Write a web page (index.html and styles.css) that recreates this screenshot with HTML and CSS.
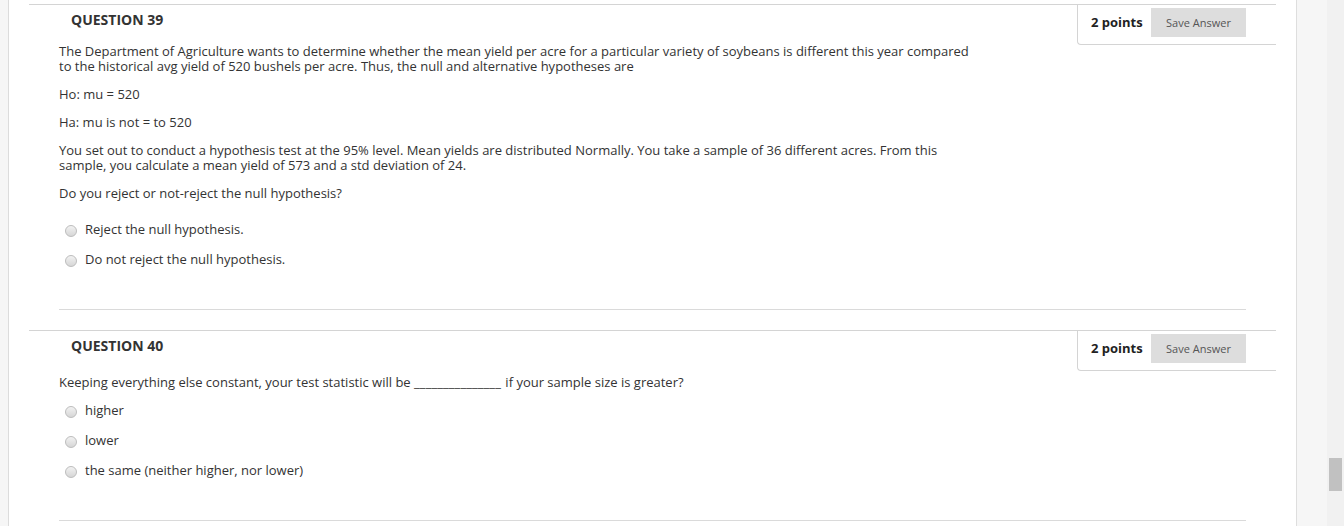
FILE: index.html
```html
<!DOCTYPE html>
<html>
<head>
<meta charset="utf-8">
<link rel="stylesheet" href="styles.css">
</head>
<body>
<div class="page">
  <div class="gutter"></div>
  <main class="main">
    <section class="question q39">
      <div class="q-head">
        <h3 class="q-title">QUESTION 39</h3>
        <div class="points-box">
          <span class="points">2 points</span>
          <button class="save">Save Answer</button>
        </div>
      </div>
      <div class="q-body">
        <div class="q-text">
          <p>The Department of Agriculture wants to determine whether the mean yield per acre for a particular variety of soybeans is different this year compared to the historical avg yield of 520 bushels per acre. Thus, the null and alternative hypotheses are</p>
          <p>Ho: mu = 520</p>
          <p>Ha: mu is not = to 520</p>
          <p>You set out to conduct a hypothesis test at the 95% level. Mean yields are distributed Normally. You take a sample of 36 different acres. From this sample, you calculate a mean yield of 573 and a std deviation of 24.</p>
          <p>Do you reject or not-reject the null hypothesis?</p>
        </div>
        <ul class="options">
          <li><span class="radio"></span><span>Reject the null hypothesis.</span></li>
          <li><span class="radio"></span><span>Do not reject the null hypothesis.</span></li>
        </ul>
      </div>
      <div class="sep"></div>
    </section>
    <section class="question q40">
      <div class="q-head">
        <h3 class="q-title">QUESTION 40</h3>
        <div class="points-box">
          <span class="points">2 points</span>
          <button class="save">Save Answer</button>
        </div>
      </div>
      <div class="q-body">
        <div class="q-text">
          <p>Keeping everything else constant, your test statistic will be <span class="blank">_______________</span> if your sample size is greater?</p>
        </div>
        <ul class="options">
          <li><span class="radio"></span><span>higher</span></li>
          <li><span class="radio"></span><span>lower</span></li>
          <li><span class="radio"></span><span>the same (neither higher, nor lower)</span></li>
        </ul>
      </div>
      <div class="sep"></div>
    </section>
  </main>
  <aside class="side"></aside>
  <div class="scrollbar"><div class="thumb"></div></div>
</div>
</body>
</html>
```
FILE: styles.css
```css
* { box-sizing: border-box; }
html, body { margin: 0; padding: 0; }
body {
  font-family: "Open Sans", "Liberation Sans", sans-serif;
  color: #333;
  background: #fff;
  font-size: 13px;
}
.page {
  display: grid;
  grid-template-columns: 9px 1fr 31px 17px;
  height: 526px;
  overflow: hidden;
}
.gutter {
  background: #f6f6f6;
  border-right: 1px solid #dcdcdc;
}
.main {
  padding: 4px 20px 0 20px;
  background: #fff;
}
.side {
  background: #f6f6f6;
  border-left: 1px solid #dedede;
}
.scrollbar {
  background: #f1f1f1;
  position: relative;
}
.thumb {
  position: absolute;
  left: 2px;
  right: 2px;
  top: 458px;
  height: 33px;
  background: #c1c1c1;
}
.question {
  border-top: 1px solid #d4d4d4;
}
.q-head {
  display: flex;
  justify-content: space-between;
  align-items: flex-start;
  height: 39px;
}
.q-title {
  margin: 5px 0 0 42px;
  font-size: 14px;
  line-height: 20px;
  font-weight: 700;
  color: #333;
}
.points-box {
  width: 199px;
  height: 40px;
  border-left: 1px solid #d4d4d4;
  border-bottom: 1px solid #d4d4d4;
  border-bottom-left-radius: 4px;
  display: flex;
  align-items: flex-start;
  padding: 3px 30px 0 13px;
  justify-content: space-between;
  background: #fff;
  position: relative;
}
.points {
  font-weight: 700;
  font-size: 13px;
  line-height: 29px;
  color: #222;
}
.save {
  width: 95px;
  height: 29px;
  border: 0;
  background: #dddddd;
  color: #555;
  font-family: "Open Sans", "Liberation Sans", sans-serif;
  font-size: 11px;
  padding: 0;
}
.q-body {
  padding: 0 30px;
}
.q40 .q-body { padding-top: 5px; }
.q-text { max-width: 920px; }
.q-text p {
  margin: 0 0 13px;
  line-height: 15px;
}
.q40 .q-text p { margin-bottom: 5px; }
.blank { letter-spacing: 0.1px; margin-right: 1px; }
.options {
  list-style: none;
  margin: 0;
  padding: 0;
}
.options li {
  height: 30px;
  display: flex;
  align-items: center;
  padding-left: 6px;
  line-height: 15px;
}
.radio {
  width: 12px;
  height: 12px;
  border-radius: 50%;
  border: 1px solid #bdbdbd;
  background: linear-gradient(#f2f2f2, #d6d6d6);
  margin: 4px 8px 0 0;
  flex: none;
}
.sep {
  margin: 35px 30px 20px 30px;
  border-top: 1px solid #dadada;
}
```
